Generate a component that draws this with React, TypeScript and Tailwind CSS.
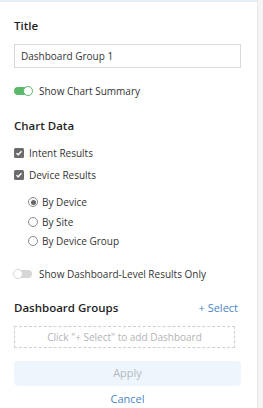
const font = { fontFamily: '"Open Sans", "Noto Sans", sans-serif' };

function Toggle({ on }: { on: boolean }) {
  return (
    <span
      className={
        "relative inline-block w-[18px] h-[8px] rounded-full " +
        (on ? "bg-[#5cb96c]" : "bg-[#d6d6d6]")
      }
    >
      <span
        className={
          "absolute top-[-1px] w-[10px] h-[10px] rounded-full bg-white border " +
          (on ? "right-[-1px] border-[#5cb96c]" : "left-[-1px] border-[#d6d6d6]")
        }
      />
    </span>
  );
}

function Check({ label, className }: { label: string; className?: string }) {
  return (
    <div className={"flex items-center h-[16px] " + (className ?? "")}>
      <span className="w-[10px] h-[10px] rounded-[1.5px] bg-[#6b6b6b] flex items-center justify-center">
        <svg width="8" height="8" viewBox="0 0 8 8">
          <path d="M1.5 4.2 L3.2 5.8 L6.5 2.2" fill="none" stroke="#fff" strokeWidth="1.4" />
        </svg>
      </span>
      <span className="ml-[5px] text-[10px] text-[#333]">{label}</span>
    </div>
  );
}

function Radio({ label, checked, className }: { label: string; checked?: boolean; className?: string }) {
  return (
    <div className={"flex items-center h-[16px] pl-[14px] " + (className ?? "")}>
      <span className="w-[10px] h-[10px] rounded-full border border-[#8a8a8a] bg-white flex items-center justify-center">
        {checked && <span className="w-[5px] h-[5px] rounded-full bg-[#666]" />}
      </span>
      <span className="ml-[4px] text-[10px] text-[#333]">{label}</span>
    </div>
  );
}

export default function App() {
  return (
    <div className="w-[263px] h-[408px] flex bg-white overflow-hidden" style={font}>
      <div className="w-[257px] border-t-2 border-[#e6edf5] px-[14px] pt-[15px] flex flex-col">
        <div className="h-[18px] leading-[18px] text-[11.5px] font-semibold text-[#1f1f1f]">Title</div>
        <div className="mt-[9px] h-[24px] w-[227px] border border-[#d9d9d9] flex items-center px-[6px] text-[10px] text-[#333]">
          Dashboard Group 1
        </div>
        <div className="mt-[15px] h-[16px] flex items-center">
          <Toggle on />
          <span className="ml-[7px] text-[10px] text-[#333]">Show Chart Summary</span>
        </div>

        <div className="mt-[18px] h-[18px] leading-[18px] text-[11.5px] font-semibold text-[#1f1f1f]">Chart Data</div>
        <Check label="Intent Results" className="mt-[10px]" />
        <Check label="Device Results" className="mt-[6px]" />
        <Radio label="By Device" checked className="mt-[11px]" />
        <Radio label="By Site" className="mt-[4px]" />
        <Radio label="By Device Group" className="mt-[3px]" />

        <div className="mt-[17px] h-[16px] flex items-center">
          <Toggle on={false} />
          <span className="ml-[7px] text-[10px] text-[#333]">Show Dashboard-Level Results Only</span>
        </div>

        <div className="mt-[17px] h-[18px] flex items-center justify-between w-[224px]">
          <span className="text-[11.5px] font-semibold text-[#1f1f1f]">Dashboard Groups</span>
          <span className="text-[11px] text-[#4a86c5]">+ Select</span>
        </div>
        <div className="mt-[9px] h-[22px] w-[221px] border border-dashed border-[#cfcfcf] flex items-center justify-center text-[10px] text-[#b3b3b3]">
          Click "+ Select" to add Dashboard
        </div>
        <button className="mt-[13px] h-[25px] w-[227px] rounded-[4px] bg-[#eef5fd] text-[11px] text-[#b5b9bf]">
          Apply
        </button>
        <div className="mt-[5px] h-[16px] leading-[16px] text-center w-[227px] text-[11px] text-[#4a86c5]">
          Cancel
        </div>
      </div>
      <div className="flex-1 bg-[#f5f5f5] border-l border-[#e9e9e9]" />
    </div>
  );
}
